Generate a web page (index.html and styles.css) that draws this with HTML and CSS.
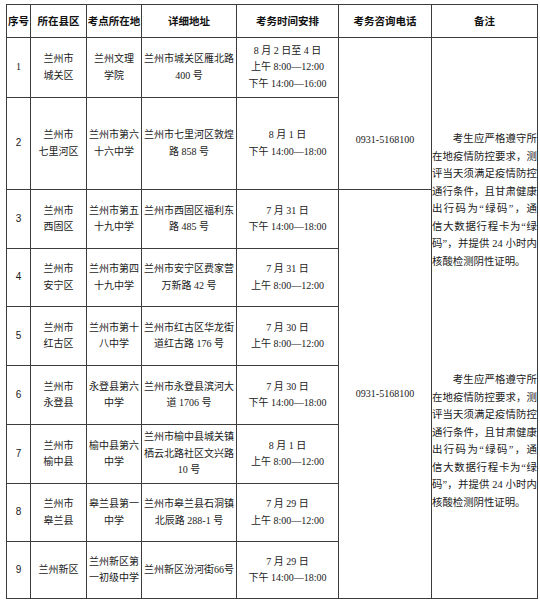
FILE: index.html
```html
<!DOCTYPE html>
<html lang="zh-CN">
<head>
<meta charset="utf-8">
<title>考点安排</title>
<link rel="stylesheet" href="styles.css">
</head>
<body>
<div class="sheet">
  <div class="cell head">序号</div>
  <div class="cell head">所在县区</div>
  <div class="cell head">考点所在地</div>
  <div class="cell head">详细地址</div>
  <div class="cell head">考务时间安排</div>
  <div class="cell head">考务咨询电话</div>
  <div class="cell head">备注</div>

  <div class="cell phone phone-a">0931-5168100</div>
  <div class="cell phone phone-b">0931-5168100</div>
  <div class="cell note">
    <p class="para">考生应严格遵守所<br>在地疫情防控要求，测<br>评当天须满足疫情防控<br>通行条件，且甘肃健康<br>出行码为“绿码”，通<br>信大数据行程卡为“绿<br>码”，并提供 24 小时内<span class="end">核酸检测阴性证明。</span></p>
    <p class="para second">考生应严格遵守所<br>在地疫情防控要求，测<br>评当天须满足疫情防控<br>通行条件，且甘肃健康<br>出行码为“绿码”，通<br>信大数据行程卡为“绿<br>码”，并提供 24 小时内<span class="end">核酸检测阴性证明。</span></p>
  </div>

  <div class="cell num serif">1</div>
  <div class="cell">兰州市<br>城关区</div>
  <div class="cell">兰州文理<br>学院</div>
  <div class="cell">兰州市城关区雁北路<br>400 号</div>
  <div class="cell">8 月 2 日至 4 日<br>上午 8:00—12:00<br>下午 14:00—16:00</div>

  <div class="cell num">2</div>
  <div class="cell">兰州市<br>七里河区</div>
  <div class="cell">兰州市第六<br>十六中学</div>
  <div class="cell">兰州市七里河区敦煌<br>路 858 号</div>
  <div class="cell">8 月 1 日<br>下午 14:00—18:00</div>

  <div class="cell num">3</div>
  <div class="cell">兰州市<br>西固区</div>
  <div class="cell">兰州市第五<br>十九中学</div>
  <div class="cell">兰州市西固区福利东<br>路 485 号</div>
  <div class="cell">7 月 31 日<br>下午 14:00—18:00</div>

  <div class="cell num">4</div>
  <div class="cell">兰州市<br>安宁区</div>
  <div class="cell">兰州市第四<br>十九中学</div>
  <div class="cell">兰州市安宁区费家营<br>万新路 42 号</div>
  <div class="cell">7 月 31 日<br>上午 8:00—12:00</div>

  <div class="cell num">5</div>
  <div class="cell">兰州市<br>红古区</div>
  <div class="cell">兰州市第十<br>八中学</div>
  <div class="cell">兰州市红古区华龙街<br>道红古路 176 号</div>
  <div class="cell">7 月 30 日<br>上午 8:00—12:00</div>

  <div class="cell num">6</div>
  <div class="cell">兰州市<br>永登县</div>
  <div class="cell">永登县第六<br>中学</div>
  <div class="cell">兰州市永登县滨河大<br>道 1706 号</div>
  <div class="cell">7 月 30 日<br>下午 14:00—18:00</div>

  <div class="cell num">7</div>
  <div class="cell">兰州市<br>榆中县</div>
  <div class="cell">榆中县第六<br>中学</div>
  <div class="cell">兰州市榆中县城关镇<br>栖云北路社区文兴路<br>10 号</div>
  <div class="cell">8 月 1 日<br>上午 8:00—12:00</div>

  <div class="cell num">8</div>
  <div class="cell">兰州市<br>皋兰县</div>
  <div class="cell">皋兰县第一<br>中学</div>
  <div class="cell">兰州市皋兰县石洞镇<br>北辰路 288-1 号</div>
  <div class="cell">7 月 29 日<br>上午 8:00—12:00</div>

  <div class="cell num">9</div>
  <div class="cell">兰州新区</div>
  <div class="cell">兰州新区第<br>一初级中学</div>
  <div class="cell">兰州新区汾河街66号</div>
  <div class="cell">7 月 29 日<br>下午 14:00—18:00</div>
</div>
</body>
</html>
```

FILE: styles.css
```css
html, body {
  margin: 0;
  background: #ffffff;
}

body {
  padding: 4px 0 0 6px;
  font-family: "Liberation Serif", "Noto Sans CJK SC", serif;
  color: #1a1a1a;
}

.sheet {
  display: grid;
  width: max-content;
  grid-template-columns: 23px 55px 54px 94px 101px 92px 105px;
  grid-template-rows: 32px 59px 91px 58px 57px 58px 58px 58px 57px 56px;
  gap: 1px;
  padding: 1px;
  background: #3c3c3c;
}

.cell {
  background: #ffffff;
  display: flex;
  align-items: center;
  justify-content: center;
  text-align: center;
  font-size: 10px;
  line-height: 16.5px;
  white-space: nowrap;
}

.head {
  font-family: "Noto Sans CJK SC", sans-serif;
  font-weight: 700;
  font-size: 10.5px;
  color: #111;
}

.num {
  font-family: "Liberation Sans", "Noto Sans CJK SC", sans-serif;
  font-size: 10px;
}

.num.serif {
  font-family: "Liberation Serif", serif;
}

.phone {
  grid-column: 6;
  font-size: 10px;
}

.phone-a {
  grid-row: 2 / span 2;
  align-items: flex-start;
  padding-top: 94px;
}

.phone-b {
  grid-row: 4 / span 7;
}

.note {
  grid-column: 7;
  grid-row: 2 / span 9;
  display: block;
  text-align: left;
  white-space: normal;
  padding-top: 92px;
}

.para {
  margin: 0;
  font-size: 10.4px;
  line-height: 17.5px;
  text-indent: 2em;
  text-align: justify;
  text-align-last: justify;
}

.para.second {
  margin-top: 101px;
}

.end {
  display: block;
  text-indent: 0;
  text-align-last: left;
}
```
